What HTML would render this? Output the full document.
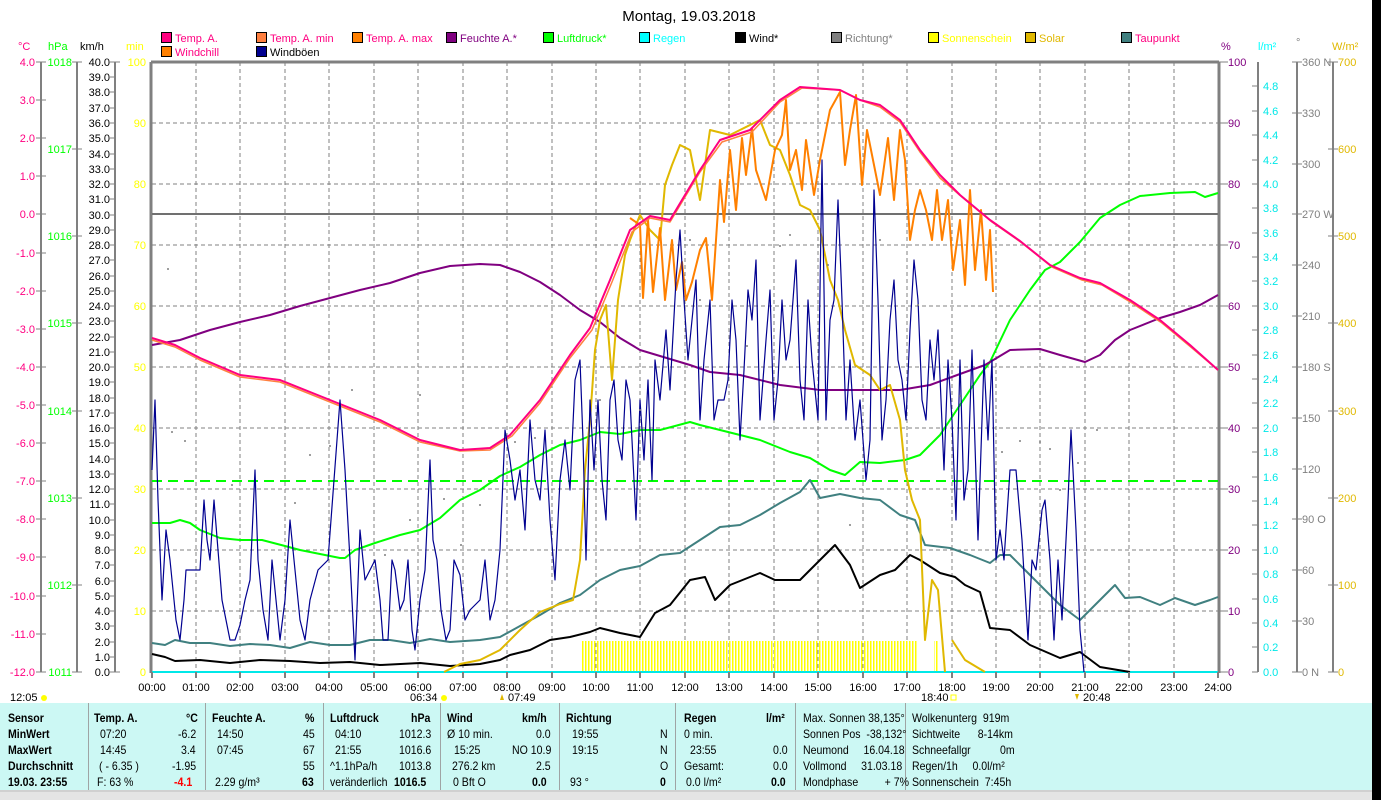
<!DOCTYPE html>
<html><head><meta charset="utf-8"><style>
body{margin:0;width:1381px;height:800px;overflow:hidden;background:#fff;font-family:"Liberation Sans",sans-serif;}
svg{position:absolute;left:0;top:0}
svg text{font-family:"Liberation Sans",sans-serif;font-size:11px}
.tbl{position:absolute;left:0;top:703px;width:1372px;height:87px;background:#ccf8f4;font-size:12px;}
.tbl div{position:absolute;white-space:pre;transform:scaleX(.88);transform-origin:left}
.b{font-weight:bold}
.sep{position:absolute;top:0;width:1px;height:87px;background:#999}
</style></head><body>
<svg width="1381" height="800" viewBox="0 0 1381 800">
<rect x="1372" y="0" width="9" height="800" fill="#000"/>
<text x="689" y="21" text-anchor="middle" style="font-size:15px">Montag, 19.03.2018</text>
<g stroke="#000" stroke-width="1">
<rect x="161.5" y="32.5" width="10" height="10" fill="#ff0080"/><rect x="256.5" y="32.5" width="10" height="10" fill="#ff8040"/><rect x="352.5" y="32.5" width="10" height="10" fill="#ff8000"/><rect x="446.5" y="32.5" width="10" height="10" fill="#800080"/><rect x="543.5" y="32.5" width="10" height="10" fill="#00ff00"/><rect x="639.5" y="32.5" width="10" height="10" fill="#00ffff"/><rect x="735.5" y="32.5" width="10" height="10" fill="#000"/><rect x="831.5" y="32.5" width="10" height="10" fill="#808080"/><rect x="928.5" y="32.5" width="10" height="10" fill="#ffff00"/><rect x="1025.5" y="32.5" width="10" height="10" fill="#e0b800"/><rect x="1121.5" y="32.5" width="10" height="10" fill="#408080"/>
<rect x="161.5" y="46.5" width="10" height="10" fill="#ff8000"/><rect x="256.5" y="46.5" width="10" height="10" fill="#000090"/>
</g>
<g style="font-size:11px">
<text x="175" y="42" fill="#ff0080">Temp. A.</text><text x="270" y="42" fill="#ff0080">Temp. A. min</text><text x="366" y="42" fill="#ff0080">Temp. A. max</text><text x="460" y="42" fill="#800080">Feuchte A.*</text><text x="557" y="42" fill="#00ff00">Luftdruck*</text><text x="653" y="42" fill="#00ffff">Regen</text><text x="749" y="42" fill="#000">Wind*</text><text x="845" y="42" fill="#808080">Richtung*</text><text x="942" y="42" fill="#ffff00">Sonnenschein</text><text x="1039" y="42" fill="#e0b800">Solar</text><text x="1135" y="42" fill="#ff0080">Taupunkt</text>
<text x="175" y="56" fill="#ff0080">Windchill</text><text x="270" y="56" fill="#000">Windböen</text>
</g>
<text x="18" y="50" fill="#ff0080">°C</text><text x="48" y="50" fill="#00ff00">hPa</text><text x="80" y="50" fill="#000">km/h</text><text x="126" y="50" fill="#ffff00">min</text>
<text x="1221" y="50" fill="#800080">%</text><text x="1258" y="50" fill="#00ffff">l/m²</text><text x="1296" y="46" fill="#808080">°</text><text x="1332" y="50" fill="#e0b800">W/m²</text>
<g stroke="#808080" stroke-width="2">
<line x1="41" y1="62" x2="41" y2="672"/><line x1="77" y1="62" x2="77" y2="672"/><line x1="115" y1="62" x2="115" y2="672"/>
<line x1="1258" y1="62" x2="1258" y2="672"/><line x1="1297" y1="62" x2="1297" y2="672"/><line x1="1333" y1="62" x2="1333" y2="672"/>
</g>
<g stroke="#808080" stroke-width="1">
<path d="M36 62h10M36 100h10M36 138h10M36 176h10M36 214h10M36 253h10M36 291h10M36 329h10M36 367h10M36 405h10M36 443h10M36 481h10M36 519h10M36 557h10M36 596h10M36 634h10M36 672h10"/>
<path d="M72 62h10M72 149h10M72 236h10M72 323h10M72 411h10M72 498h10M72 585h10M72 672h10"/>
<path d="M110 62h10M110 77h5M110 92h5M110 108h5M110 123h5M110 138h5M110 154h5M110 169h5M110 184h5M110 199h5M110 215h5M110 230h5M110 245h5M110 260h5M110 276h5M110 291h5M110 306h5M110 321h5M110 337h5M110 352h5M110 367h5M110 382h5M110 398h5M110 413h5M110 428h5M110 443h5M110 459h5M110 474h5M110 489h5M110 504h5M110 520h5M110 535h5M110 550h5M110 565h5M110 581h5M110 596h5M110 611h5M110 626h5M110 642h5M110 657h5M110 672h10"/>
<path d="M1218 62h10M1218 123h10M1218 184h10M1218 245h10M1218 306h10M1218 367h10M1218 428h10M1218 489h10M1218 550h10M1218 611h10M1218 672h10"/>
<path d="M1252 86h6M1252 111h6M1252 135h6M1252 160h6M1252 184h6M1252 208h6M1252 233h6M1252 257h6M1252 281h6M1252 306h6M1252 330h6M1252 355h6M1252 379h6M1252 403h6M1252 428h6M1252 452h6M1252 477h6M1252 501h6M1252 525h6M1252 550h6M1252 574h6M1252 599h6M1252 623h6M1252 647h6M1252 672h6"/>
<path d="M1292 62h10M1292 113h10M1292 164h10M1292 214h10M1292 265h10M1292 316h10M1292 367h10M1292 418h10M1292 469h10M1292 519h10M1292 570h10M1292 621h10M1292 672h10"/>
<path d="M1328 62h10M1328 149h10M1328 236h10M1328 323h10M1328 411h10M1328 498h10M1328 585h10M1328 672h10"/>
</g>
<g fill="#ff0080" text-anchor="end">
<text x="35" y="66">4.0</text><text x="35" y="104">3.0</text><text x="35" y="142">2.0</text><text x="35" y="180">1.0</text><text x="35" y="218">0.0</text><text x="35" y="257">-1.0</text><text x="35" y="295">-2.0</text><text x="35" y="333">-3.0</text><text x="35" y="371">-4.0</text><text x="35" y="409">-5.0</text><text x="35" y="447">-6.0</text><text x="35" y="485">-7.0</text><text x="35" y="523">-8.0</text><text x="35" y="561">-9.0</text><text x="35" y="600">-10.0</text><text x="35" y="638">-11.0</text><text x="35" y="676">-12.0</text>
</g>
<g fill="#00ff00" text-anchor="end">
<text x="72" y="66">1018</text><text x="72" y="153">1017</text><text x="72" y="240">1016</text><text x="72" y="327">1015</text><text x="72" y="415">1014</text><text x="72" y="502">1013</text><text x="72" y="589">1012</text><text x="72" y="676">1011</text>
</g>
<g fill="#000" text-anchor="end" style="font-size:10.5px">
<text x="110" y="66">40.0</text><text x="110" y="81">39.0</text><text x="110" y="96">38.0</text><text x="110" y="112">37.0</text><text x="110" y="127">36.0</text><text x="110" y="142">35.0</text><text x="110" y="158">34.0</text><text x="110" y="173">33.0</text><text x="110" y="188">32.0</text><text x="110" y="203">31.0</text><text x="110" y="219">30.0</text><text x="110" y="234">29.0</text><text x="110" y="249">28.0</text><text x="110" y="264">27.0</text><text x="110" y="280">26.0</text><text x="110" y="295">25.0</text><text x="110" y="310">24.0</text><text x="110" y="325">23.0</text><text x="110" y="341">22.0</text><text x="110" y="356">21.0</text><text x="110" y="371">20.0</text><text x="110" y="386">19.0</text><text x="110" y="402">18.0</text><text x="110" y="417">17.0</text><text x="110" y="432">16.0</text><text x="110" y="447">15.0</text><text x="110" y="463">14.0</text><text x="110" y="478">13.0</text><text x="110" y="493">12.0</text><text x="110" y="508">11.0</text><text x="110" y="524">10.0</text><text x="110" y="539">9.0</text><text x="110" y="554">8.0</text><text x="110" y="569">7.0</text><text x="110" y="585">6.0</text><text x="110" y="600">5.0</text><text x="110" y="615">4.0</text><text x="110" y="630">3.0</text><text x="110" y="646">2.0</text><text x="110" y="661">1.0</text><text x="110" y="676">0.0</text>
</g>
<g fill="#ffff00" text-anchor="end">
<text x="146" y="66">100</text><text x="146" y="127">90</text><text x="146" y="188">80</text><text x="146" y="249">70</text><text x="146" y="310">60</text><text x="146" y="371">50</text><text x="146" y="432">40</text><text x="146" y="493">30</text><text x="146" y="554">20</text><text x="146" y="615">10</text><text x="146" y="676">0</text>
</g>
<g fill="#800080">
<text x="1228" y="66">100</text><text x="1228" y="127">90</text><text x="1228" y="188">80</text><text x="1228" y="249">70</text><text x="1228" y="310">60</text><text x="1228" y="371">50</text><text x="1228" y="432">40</text><text x="1228" y="493">30</text><text x="1228" y="554">20</text><text x="1228" y="615">10</text><text x="1228" y="676">0</text>
</g>
<g fill="#00e8e8" style="font-size:10.5px">
<text x="1263" y="90">4.8</text><text x="1263" y="115">4.6</text><text x="1263" y="139">4.4</text><text x="1263" y="164">4.2</text><text x="1263" y="188">4.0</text><text x="1263" y="212">3.8</text><text x="1263" y="237">3.6</text><text x="1263" y="261">3.4</text><text x="1263" y="285">3.2</text><text x="1263" y="310">3.0</text><text x="1263" y="334">2.8</text><text x="1263" y="359">2.6</text><text x="1263" y="383">2.4</text><text x="1263" y="407">2.2</text><text x="1263" y="432">2.0</text><text x="1263" y="456">1.8</text><text x="1263" y="481">1.6</text><text x="1263" y="505">1.4</text><text x="1263" y="529">1.2</text><text x="1263" y="554">1.0</text><text x="1263" y="578">0.8</text><text x="1263" y="603">0.6</text><text x="1263" y="627">0.4</text><text x="1263" y="651">0.2</text><text x="1263" y="676">0.0</text>
</g>
<g fill="#808080">
<text x="1302" y="66">360 N</text><text x="1302" y="117">330</text><text x="1302" y="168">300</text><text x="1302" y="218">270 W</text><text x="1302" y="269">240</text><text x="1302" y="320">210</text><text x="1302" y="371">180 S</text><text x="1302" y="422">150</text><text x="1302" y="473">120</text><text x="1302" y="523">90  O</text><text x="1302" y="574">60</text><text x="1302" y="625">30</text><text x="1302" y="676">0   N</text>
</g>
<g fill="#e0b800">
<text x="1338" y="66">700</text><text x="1338" y="153">600</text><text x="1338" y="240">500</text><text x="1338" y="327">400</text><text x="1338" y="415">300</text><text x="1338" y="502">200</text><text x="1338" y="589">100</text><text x="1338" y="676">0</text>
</g>
<g stroke="#808080" stroke-width="1" stroke-dasharray="4,3">
<path d="M196 62V672M240 62V672M285 62V672M329 62V672M374 62V672M418 62V672M463 62V672M507 62V672M552 62V672M596 62V672M640 62V672M685 62V672M729 62V672M774 62V672M818 62V672M863 62V672M907 62V672M952 62V672M996 62V672M1040 62V672M1085 62V672M1129 62V672M1174 62V672"/>
<path d="M152 123H1218M152 184H1218M152 245H1218M152 306H1218M152 367H1218M152 428H1218M152 489H1218M152 550H1218M152 611H1218"/>
</g>
<g stroke="#808080" stroke-width="3" fill="none"><path d="M151 62V673M151 62H1219M1219 62V673"/></g>
<line x1="152" y1="214" x2="1218" y2="214" stroke="#707070" stroke-width="2"/>
<line x1="152" y1="481" x2="1218" y2="481" stroke="#00ff00" stroke-width="2" stroke-dasharray="10,6"/>
<defs><pattern id="sb" width="3" height="31" patternUnits="userSpaceOnUse"><rect width="1.5" height="31" fill="#ffff00"/></pattern></defs>
<rect x="581" y="641" width="337" height="31" fill="url(#sb)"/>
<rect x="934" y="641" width="4" height="31" fill="url(#sb)"/>
<line x1="152" y1="672" x2="1218" y2="672" stroke="#00e8e8" stroke-width="2"/>
<g fill="none" stroke-width="2" stroke-linejoin="round">
<polyline stroke="#00ff00" points="152,523 170,523 180,520 190,523 200,530 220,538 240,540 262,540 285,546 300,550 320,554 340,558 345,558 355,550 375,543 400,535 420,530 440,518 460,500 480,490 500,476 520,467 540,455 560,445 580,440 600,432 620,434 640,430 660,430 690,422 700,425 720,430 740,435 760,440 790,452 810,458 830,470 845,475 860,462 880,463 905,460 920,455 940,435 960,405 980,375 990,362 1010,320 1030,290 1045,270 1060,262 1080,242 1100,218 1120,205 1140,196 1170,193 1195,192 1205,197 1218,193"/>
<polyline stroke="#800080" points="152,345 180,340 210,330 240,322 270,315 300,306 330,298 360,290 390,283 420,273 450,266 480,264 500,265 520,272 540,282 560,295 580,310 600,322 620,338 640,350 660,356 690,365 710,372 740,375 780,385 820,390 860,390 900,390 930,385 960,374 985,365 1010,350 1040,349 1060,355 1085,362 1100,355 1115,340 1130,330 1160,318 1180,312 1200,305 1218,295"/>
<polyline stroke="#408080" points="152,643 165,645 175,640 190,643 210,643 230,646 250,644 270,645 290,648 310,642 330,645 350,645 370,640 390,640 410,643 430,639 450,642 480,640 500,637 520,626 540,615 560,603 580,595 600,580 620,570 640,566 660,555 680,553 700,540 720,527 740,525 760,515 780,503 800,492 810,480 820,498 840,494 860,498 880,500 900,515 915,520 925,545 950,548 970,555 990,563 1000,555 1010,555 1020,565 1040,585 1060,605 1080,620 1090,610 1100,600 1115,585 1125,598 1140,597 1160,605 1175,598 1195,605 1210,600 1218,597"/>
<polyline stroke="#000" points="152,654 165,657 175,661 200,660 230,663 260,660 290,661 320,663 350,662 380,665 420,663 450,666 480,664 500,660 510,655 530,650 550,640 570,637 590,632 600,628 620,633 640,637 655,613 670,605 690,580 705,577 715,600 730,585 760,573 775,580 800,580 820,560 835,545 850,565 860,588 880,575 895,570 910,555 920,560 940,573 955,577 965,585 980,592 990,628 1010,630 1030,645 1060,658 1080,652 1100,667 1130,672"/>
<polyline stroke="#e0b800" points="444,672 460,664 480,660 500,650 520,630 540,612 560,604 573,600 580,560 585,470 590,420 595,350 600,320 606,305 612,380 618,300 625,255 630,240 640,215 650,230 660,240 665,185 672,165 680,145 690,150 700,200 710,130 730,135 760,120 770,145 780,150 790,175 800,205 810,210 820,230 830,280 838,300 845,330 855,365 870,375 880,390 890,385 900,420 905,470 912,500 920,520 925,640 932,580 938,590 945,672"/>
<polyline stroke="#e0b800" points="952,640 965,660 985,672"/>
<polyline stroke="#ff8000" points="630,218 640,225 643,298 648,220 653,292 660,228 665,300 672,240 676,290 682,262 686,300 692,282 700,250 706,238 712,300 720,180 724,222 730,150 736,210 742,138 746,175 752,128 756,170 766,200 775,150 782,135 786,100 790,170 796,150 802,190 806,140 814,195 820,160 830,110 840,92 845,165 850,130 856,95 862,185 867,130 874,165 880,195 888,138 894,200 900,130 905,160 910,240 915,210 920,190 926,210 932,240 937,190 942,240 948,200 953,270 960,220 965,285 970,190 975,270 981,210 986,280 990,230 993,292"/>
<polyline stroke="#ff8040" stroke-width="1.5" points="152,340 175,347 200,360 240,377 280,382 320,398 380,422 420,442 460,451 490,450 512,436 540,403 570,358 592,330 612,282 632,232 650,218 670,222 700,172 722,142 752,132 780,102 802,88 840,90 860,100 880,107 900,122 920,152 940,178 962,197 992,222 1022,243 1052,267 1082,280 1102,285 1132,303 1162,323 1192,348 1218,370"/>
<polyline stroke="#ff0080" points="152,338 175,345 200,358 240,375 280,380 320,396 380,420 420,440 460,450 490,448 510,435 540,400 570,355 590,328 610,280 630,230 650,216 670,220 700,170 720,140 750,130 780,100 800,87 840,90 860,100 880,105 900,120 920,150 940,175 960,195 990,220 1020,241 1050,265 1080,278 1100,283 1130,300 1160,320 1190,345 1218,370"/>
<polyline stroke="#000090" stroke-width="1.2" points="152,470 155,400 158,500 162,600 166,530 170,560 173,590 176,620 180,640 184,600 186,570 190,570 200,570 204,500 207,540 210,560 214,500 218,550 222,600 226,620 230,640 235,640 240,625 245,600 250,580 255,470 258,560 263,610 268,640 272,560 276,600 280,640 285,600 290,520 295,570 300,620 305,640 310,600 318,570 328,560 340,400 345,470 350,560 355,660 360,530 365,580 370,570 375,560 380,600 383,640 388,640 392,560 395,570 400,610 404,600 408,560 412,630 415,650 420,600 425,570 430,460 433,540 437,560 441,610 446,640 450,630 454,560 460,575 465,620 470,610 480,600 485,560 490,620 495,600 500,550 505,430 510,460 515,500 520,470 525,530 530,420 535,480 540,500 545,430 550,520 555,580 560,480 565,440 570,490 575,380 580,360 583,440 586,560 590,400 594,470 598,400 602,480 606,520 610,400 614,380 618,440 622,460 626,380 630,400 636,520 640,400 644,460 648,380 652,480 655,360 660,400 666,330 670,390 676,280 680,230 684,300 688,360 692,320 696,280 700,420 704,360 710,300 714,420 718,400 724,400 728,380 732,300 736,340 740,440 744,370 748,290 752,320 756,260 760,420 766,340 770,290 774,420 778,380 782,300 786,360 790,340 796,260 800,380 804,420 808,300 812,360 818,420 822,160 826,420 830,320 834,300 838,200 842,300 846,420 850,360 855,440 860,400 866,480 870,440 874,190 878,300 882,440 886,400 890,320 894,280 898,360 902,380 906,420 910,330 914,260 918,300 922,400 926,420 930,340 934,380 938,330 944,470 948,360 952,420 956,520 960,360 964,500 968,470 972,350 978,540 984,360 988,440 992,360 996,560 1000,530 1004,560 1010,470 1016,470 1022,540 1028,640 1032,560 1036,570 1042,510 1045,500 1050,560 1054,640 1058,560 1062,620 1068,500 1071,430 1076,530 1080,630 1084,672"/>
</g>
<g fill="#808080">
<circle cx="168" cy="269" r="1"/><circle cx="172" cy="432" r="1"/><circle cx="185" cy="441" r="1"/><circle cx="232" cy="485" r="1"/><circle cx="295" cy="503" r="1"/><circle cx="310" cy="455" r="1"/><circle cx="330" cy="446" r="1"/><circle cx="352" cy="390" r="1"/><circle cx="385" cy="555" r="1"/><circle cx="410" cy="520" r="1"/><circle cx="420" cy="395" r="1"/><circle cx="444" cy="499" r="1"/><circle cx="461" cy="545" r="1"/><circle cx="480" cy="505" r="1"/><circle cx="515" cy="442" r="1"/><circle cx="535" cy="438" r="1"/><circle cx="600" cy="400" r="1"/><circle cx="640" cy="410" r="1"/><circle cx="690" cy="240" r="1"/><circle cx="700" cy="300" r="1"/><circle cx="747" cy="346" r="1"/><circle cx="780" cy="246" r="1"/><circle cx="790" cy="235" r="1"/><circle cx="828" cy="265" r="1"/><circle cx="850" cy="525" r="1"/><circle cx="880" cy="240" r="1"/><circle cx="918" cy="305" r="1"/><circle cx="960" cy="396" r="1"/><circle cx="1002" cy="452" r="1"/><circle cx="1020" cy="441" r="1"/><circle cx="1040" cy="442" r="1"/><circle cx="1050" cy="449" r="1"/><circle cx="1060" cy="490" r="1"/><circle cx="1078" cy="463" r="1"/><circle cx="1097" cy="430" r="1"/></g>
<g stroke="#808080" stroke-width="2"><path d="M152 672v6M196 672v6M240 672v6M285 672v6M329 672v6M374 672v6M418 672v6M463 672v6M507 672v6M552 672v6M596 672v6M640 672v6M685 672v6M729 672v6M774 672v6M818 672v6M863 672v6M907 672v6M952 672v6M996 672v6M1040 672v6M1085 672v6M1129 672v6M1174 672v6M1218 672v6"/></g>
<g text-anchor="middle" style="font-size:11px">
<text x="152" y="691">00:00</text><text x="196" y="691">01:00</text><text x="240" y="691">02:00</text><text x="285" y="691">03:00</text><text x="329" y="691">04:00</text><text x="374" y="691">05:00</text><text x="418" y="691">06:00</text><text x="463" y="691">07:00</text><text x="507" y="691">08:00</text><text x="552" y="691">09:00</text><text x="596" y="691">10:00</text><text x="640" y="691">11:00</text><text x="685" y="691">12:00</text><text x="729" y="691">13:00</text><text x="774" y="691">14:00</text><text x="818" y="691">15:00</text><text x="863" y="691">16:00</text><text x="907" y="691">17:00</text><text x="952" y="691">18:00</text><text x="996" y="691">19:00</text><text x="1040" y="691">20:00</text><text x="1085" y="691">21:00</text><text x="1129" y="691">22:00</text><text x="1174" y="691">23:00</text><text x="1218" y="691">24:00</text>
</g>
<text x="10" y="701">12:05</text><circle cx="44" cy="698" r="3" fill="#ffff00"/>
<text x="410" y="701">06:34</text><circle cx="444" cy="698" r="3" fill="#ffff00"/>
<text x="508" y="701">07:49</text><path d="M500 700l2-6 2 6z" fill="#e0b800"/>
<text x="921" y="701">18:40</text><rect x="951" y="695" width="5" height="5" fill="none" stroke="#ffff00"/>
<text x="1083" y="701">20:48</text><path d="M1075 694l2 6 2-6z" fill="#e0b800"/>
<rect x="0" y="792" width="1372" height="8" fill="#e4e4e4"/>
<line x1="0" y1="791" x2="1372" y2="791" stroke="#a0a0a0"/>
</svg>
<div class="tbl">
<div class="sep" style="left:88px"></div><div class="sep" style="left:205px"></div><div class="sep" style="left:323px"></div><div class="sep" style="left:440px"></div><div class="sep" style="left:559px"></div><div class="sep" style="left:675px"></div><div class="sep" style="left:795px"></div><div class="sep" style="left:905px"></div>
<div class="b" style="left:8px;top:8px">Sensor</div><div class="b" style="left:8px;top:24px">MinWert</div><div class="b" style="left:8px;top:40px">MaxWert</div><div class="b" style="left:8px;top:56px">Durchschnitt</div><div class="b" style="left:8px;top:72px">19.03. 23:55</div>
<div class="b" style="left:94px;top:8px">Temp. A.</div><div class="b" style="left:186px;top:8px">°C</div>
<div style="left:100px;top:24px">07:20</div><div style="left:178px;top:24px">-6.2</div>
<div style="left:100px;top:40px">14:45</div><div style="left:181px;top:40px">3.4</div>
<div style="left:99px;top:56px">( - 6.35 )</div><div style="left:172px;top:56px">-1.95</div>
<div style="left:97px;top:72px">F: 63 %</div><div class="b" style="left:174px;top:72px;color:#f00">-4.1</div>
<div class="b" style="left:212px;top:8px">Feuchte A.</div><div class="b" style="left:305px;top:8px">%</div>
<div style="left:217px;top:24px">14:50</div><div style="left:303px;top:24px">45</div>
<div style="left:217px;top:40px">07:45</div><div style="left:303px;top:40px">67</div>
<div style="left:303px;top:56px">55</div>
<div style="left:215px;top:72px">2.29 g/m³</div><div class="b" style="left:302px;top:72px">63</div>
<div class="b" style="left:330px;top:8px">Luftdruck</div><div class="b" style="left:411px;top:8px">hPa</div>
<div style="left:335px;top:24px">04:10</div><div style="left:399px;top:24px">1012.3</div>
<div style="left:335px;top:40px">21:55</div><div style="left:399px;top:40px">1016.6</div>
<div style="left:330px;top:56px">^1.1hPa/h</div><div style="left:399px;top:56px">1013.8</div>
<div style="left:330px;top:72px">veränderlich</div><div class="b" style="left:394px;top:72px">1016.5</div>
<div class="b" style="left:447px;top:8px">Wind</div><div class="b" style="left:522px;top:8px">km/h</div>
<div style="left:447px;top:24px">Ø 10 min.</div><div style="left:536px;top:24px">0.0</div>
<div style="left:454px;top:40px">15:25</div><div style="left:512px;top:40px">NO 10.9</div>
<div style="left:452px;top:56px">276.2 km</div><div style="left:536px;top:56px">2.5</div>
<div style="left:453px;top:72px">0 Bft O</div><div class="b" style="left:532px;top:72px">0.0</div>
<div class="b" style="left:566px;top:8px">Richtung</div>
<div style="left:572px;top:24px">19:55</div><div style="left:660px;top:24px">N</div>
<div style="left:572px;top:40px">19:15</div><div style="left:660px;top:40px">N</div>
<div style="left:660px;top:56px">O</div>
<div style="left:570px;top:72px">93 °</div><div class="b" style="left:660px;top:72px">0</div>
<div class="b" style="left:684px;top:8px">Regen</div><div class="b" style="left:766px;top:8px">l/m²</div>
<div style="left:684px;top:24px">0 min.</div>
<div style="left:690px;top:40px">23:55</div><div style="left:773px;top:40px">0.0</div>
<div style="left:684px;top:56px">Gesamt:</div><div style="left:773px;top:56px">0.0</div>
<div style="left:686px;top:72px">0.0 l/m²</div><div class="b" style="left:771px;top:72px">0.0</div>
<div style="left:803px;top:8px">Max. Sonnen 38,135°</div>
<div style="left:803px;top:24px">Sonnen Pos  -38,132°</div>
<div style="left:803px;top:40px">Neumond     16.04.18</div>
<div style="left:803px;top:56px">Vollmond     31.03.18</div>
<div style="left:803px;top:72px">Mondphase         + 7%</div>
<div style="left:912px;top:8px">Wolkenunterg  919m</div>
<div style="left:912px;top:24px">Sichtweite      8-14km</div>
<div style="left:912px;top:40px">Schneefallgr          0m</div>
<div style="left:912px;top:56px">Regen/1h     0.0l/m²</div>
<div style="left:912px;top:72px">Sonnenschein  7:45h</div>
</div>
</body></html>
